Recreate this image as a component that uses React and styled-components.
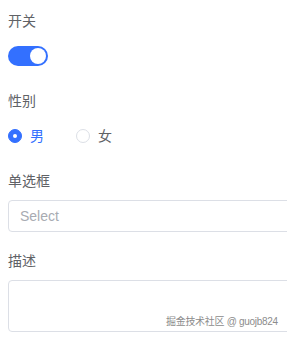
import React, { useState } from "react";
import styled, { createGlobalStyle } from "styled-components";

const Global = createGlobalStyle`
  html, body { margin: 0; padding: 0; background: #fff; overflow: hidden; }
  body { font-family: "Liberation Sans", "Noto Sans CJK SC", sans-serif; }
`;

const PRIMARY = "#3370ff";

const Form = styled.form`
  width: 330px;
  padding: 10px 0 0 8px;
  display: flex;
  flex-direction: column;
  gap: 18px;
`;

const Item = styled.div`
  display: flex;
  flex-direction: column;
  gap: 8px;
`;

const Label = styled.label`
  font-size: 14px;
  line-height: 22px;
  height: 22px;
  color: #606266;
`;

const Content = styled.div`
  display: flex;
  align-items: center;
  min-height: 32px;
  position: relative;
`;

const SwitchTrack = styled.button`
  width: 40px;
  height: 20px;
  border-radius: 10px;
  border: none;
  padding: 0;
  background: ${(p) => (p.$on ? PRIMARY : "#dcdfe6")};
  position: relative;
  cursor: pointer;
`;

const Knob = styled.span`
  position: absolute;
  top: 2px;
  left: ${(p) => (p.$on ? "22px" : "2px")};
  width: 16px;
  height: 16px;
  border-radius: 50%;
  background: #fff;
`;

const RadioGroup = styled.div`
  display: flex;
  align-items: center;
`;

const Radio = styled.label`
  display: flex;
  align-items: center;
  margin-right: 32px;
  cursor: pointer;
  font-size: 14px;
  color: ${(p) => (p.$checked ? PRIMARY : "#606266")};
`;

const Circle = styled.span`
  width: 14px;
  height: 14px;
  box-sizing: border-box;
  border-radius: 50%;
  border: 1px solid ${(p) => (p.$checked ? PRIMARY : "#dcdfe6")};
  background: ${(p) => (p.$checked ? PRIMARY : "#fff")};
  display: flex;
  align-items: center;
  justify-content: center;
  &::after {
    content: "";
    width: 4px;
    height: 4px;
    border-radius: 50%;
    background: #fff;
    display: ${(p) => (p.$checked ? "block" : "none")};
  }
`;

const RadioText = styled.span`
  padding-left: 8px;
  line-height: 20px;
`;

const SelectBox = styled.div`
  width: 100%;
  height: 32px;
  box-sizing: border-box;
  border: 1px solid #dcdfe6;
  border-radius: 4px;
  display: flex;
  align-items: center;
  padding: 0 11px;
  font-size: 14px;
  color: #a8abb2;
`;

const TextArea = styled.textarea`
  width: 100%;
  height: 52px;
  box-sizing: border-box;
  border: 1px solid #dcdfe6;
  border-radius: 4px;
  resize: none;
  font-family: inherit;
  font-size: 14px;
  padding: 5px 11px;
  outline: none;
`;

const Watermark = styled.span`
  position: absolute;
  left: 158px;
  bottom: 4px;
  font-size: 10px;
  letter-spacing: -0.3px;
  color: #8c8c8c;
  white-space: nowrap;
  pointer-events: none;
`;

export default function App() {
  const [on, setOn] = useState(true);
  const [sex, setSex] = useState("m");
  return (
    <>
      <Global />
      <Form onSubmit={(e) => e.preventDefault()}>
        <Item>
          <Label>开关</Label>
          <Content>
            <SwitchTrack type="button" $on={on} onClick={() => setOn(!on)}>
              <Knob $on={on} />
            </SwitchTrack>
          </Content>
        </Item>
        <Item>
          <Label>性别</Label>
          <Content>
            <RadioGroup>
              <Radio $checked={sex === "m"} onClick={() => setSex("m")}>
                <Circle $checked={sex === "m"} />
                <RadioText>男</RadioText>
              </Radio>
              <Radio $checked={sex === "f"} onClick={() => setSex("f")}>
                <Circle $checked={sex === "f"} />
                <RadioText>女</RadioText>
              </Radio>
            </RadioGroup>
          </Content>
        </Item>
        <Item>
          <Label>单选框</Label>
          <Content>
            <SelectBox>Select</SelectBox>
          </Content>
        </Item>
        <Item>
          <Label>描述</Label>
          <Content>
            <TextArea />
            <Watermark>掘金技术社区 @ guojb824</Watermark>
          </Content>
        </Item>
      </Form>
    </>
  );
}
